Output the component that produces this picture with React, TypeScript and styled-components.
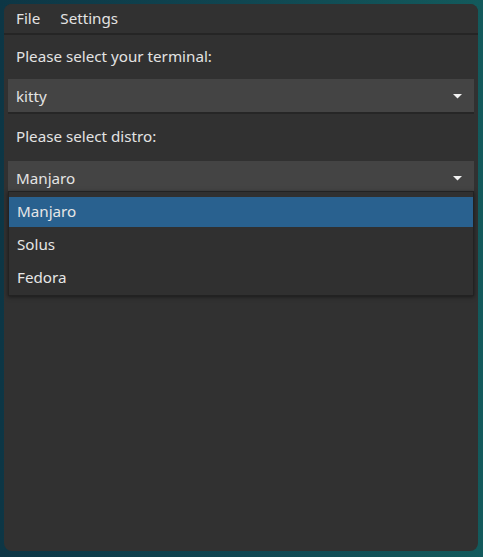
import React from "react";
import styled, { createGlobalStyle } from "styled-components";

const GlobalStyle = createGlobalStyle`
  html, body {
    margin: 0;
    padding: 0;
    width: 483px;
    height: 557px;
    overflow: hidden;
    background: linear-gradient(90deg, #0d3645 0%, #104651 50%, #135a5c 100%);
    font-family: "Noto Sans", "Open Sans", sans-serif;
  }
`;

const Window = styled.div`
  margin: 4px 5px 6px 4px;
  width: 474px;
  height: 547px;
  border-radius: 8px;
  background: #313131;
  color: #e3e3e3;
  font-size: 15.2px;
  display: flex;
  flex-direction: column;
  overflow: hidden;
`;

const MenuBar = styled.div`
  height: 29px;
  display: flex;
  align-items: center;
  padding-left: 2px;
  border-bottom: 2px solid #252525;
  background: #313131;
`;

const MenuItem = styled.span`
  padding: 0 10px;
  line-height: 29px;
`;

const Content = styled.div`
  padding: 0 4px;
  display: flex;
  flex-direction: column;
`;

const Label = styled.div<{ $h: number }>`
  height: ${(p) => p.$h}px;
  box-sizing: border-box;
  display: flex;
  align-items: center;
  padding: 0 0 3px 8px;
`;

const ComboWrap = styled.div`
  position: relative;
`;

const Combo = styled.div`
  height: 35px;
  box-sizing: border-box;
  padding: 0 12px 0 8px;
  background: #444444;
  border-bottom: 2px solid #262626;
  display: flex;
  align-items: center;
  justify-content: space-between;
`;

const Arrow = styled.svg`
  width: 9px;
  height: 5px;
  margin-top: 1px;
`;

const Popup = styled.div`
  position: absolute;
  left: 0;
  right: 0;
  top: 30px;
  height: 105px;
  box-sizing: border-box;
  padding-top: 5px;
  background: #303030;
  border: 1px solid #222222;
  box-shadow: 0 1px 4px rgba(0, 0, 0, 0.5);
  display: flex;
  flex-direction: column;
  gap: 3px;
`;

const Option = styled.div<{ $selected?: boolean }>`
  height: 30px;
  display: flex;
  align-items: center;
  padding: 0 0 2px 8px;
  box-sizing: border-box;
  background: ${(p) => (p.$selected ? "#29618f" : "transparent")};
  color: #e6e6e6;
`;

function ChevronDown() {
  return (
    <Arrow viewBox="0 0 9 5">
      <path d="M0 0 H9 L4.5 4.5 Z" fill="#f2f2f2" />
    </Arrow>
  );
}

export default function App() {
  const distros = ["Manjaro", "Solus", "Fedora"];
  return (
    <>
      <GlobalStyle />
      <Window>
        <MenuBar>
          <MenuItem>File</MenuItem>
          <MenuItem>Settings</MenuItem>
        </MenuBar>
        <Content>
          <Label $h={44}>Please select your terminal:</Label>
          <Combo>
            <span>kitty</span>
            <ChevronDown />
          </Combo>
          <Label $h={47}>Please select distro:</Label>
          <ComboWrap>
            <Combo>
              <span>Manjaro</span>
              <ChevronDown />
            </Combo>
            <Popup>
              {distros.map((d, i) => (
                <Option key={d} $selected={i === 0}>
                  {d}
                </Option>
              ))}
            </Popup>
          </ComboWrap>
        </Content>
      </Window>
    </>
  );
}
